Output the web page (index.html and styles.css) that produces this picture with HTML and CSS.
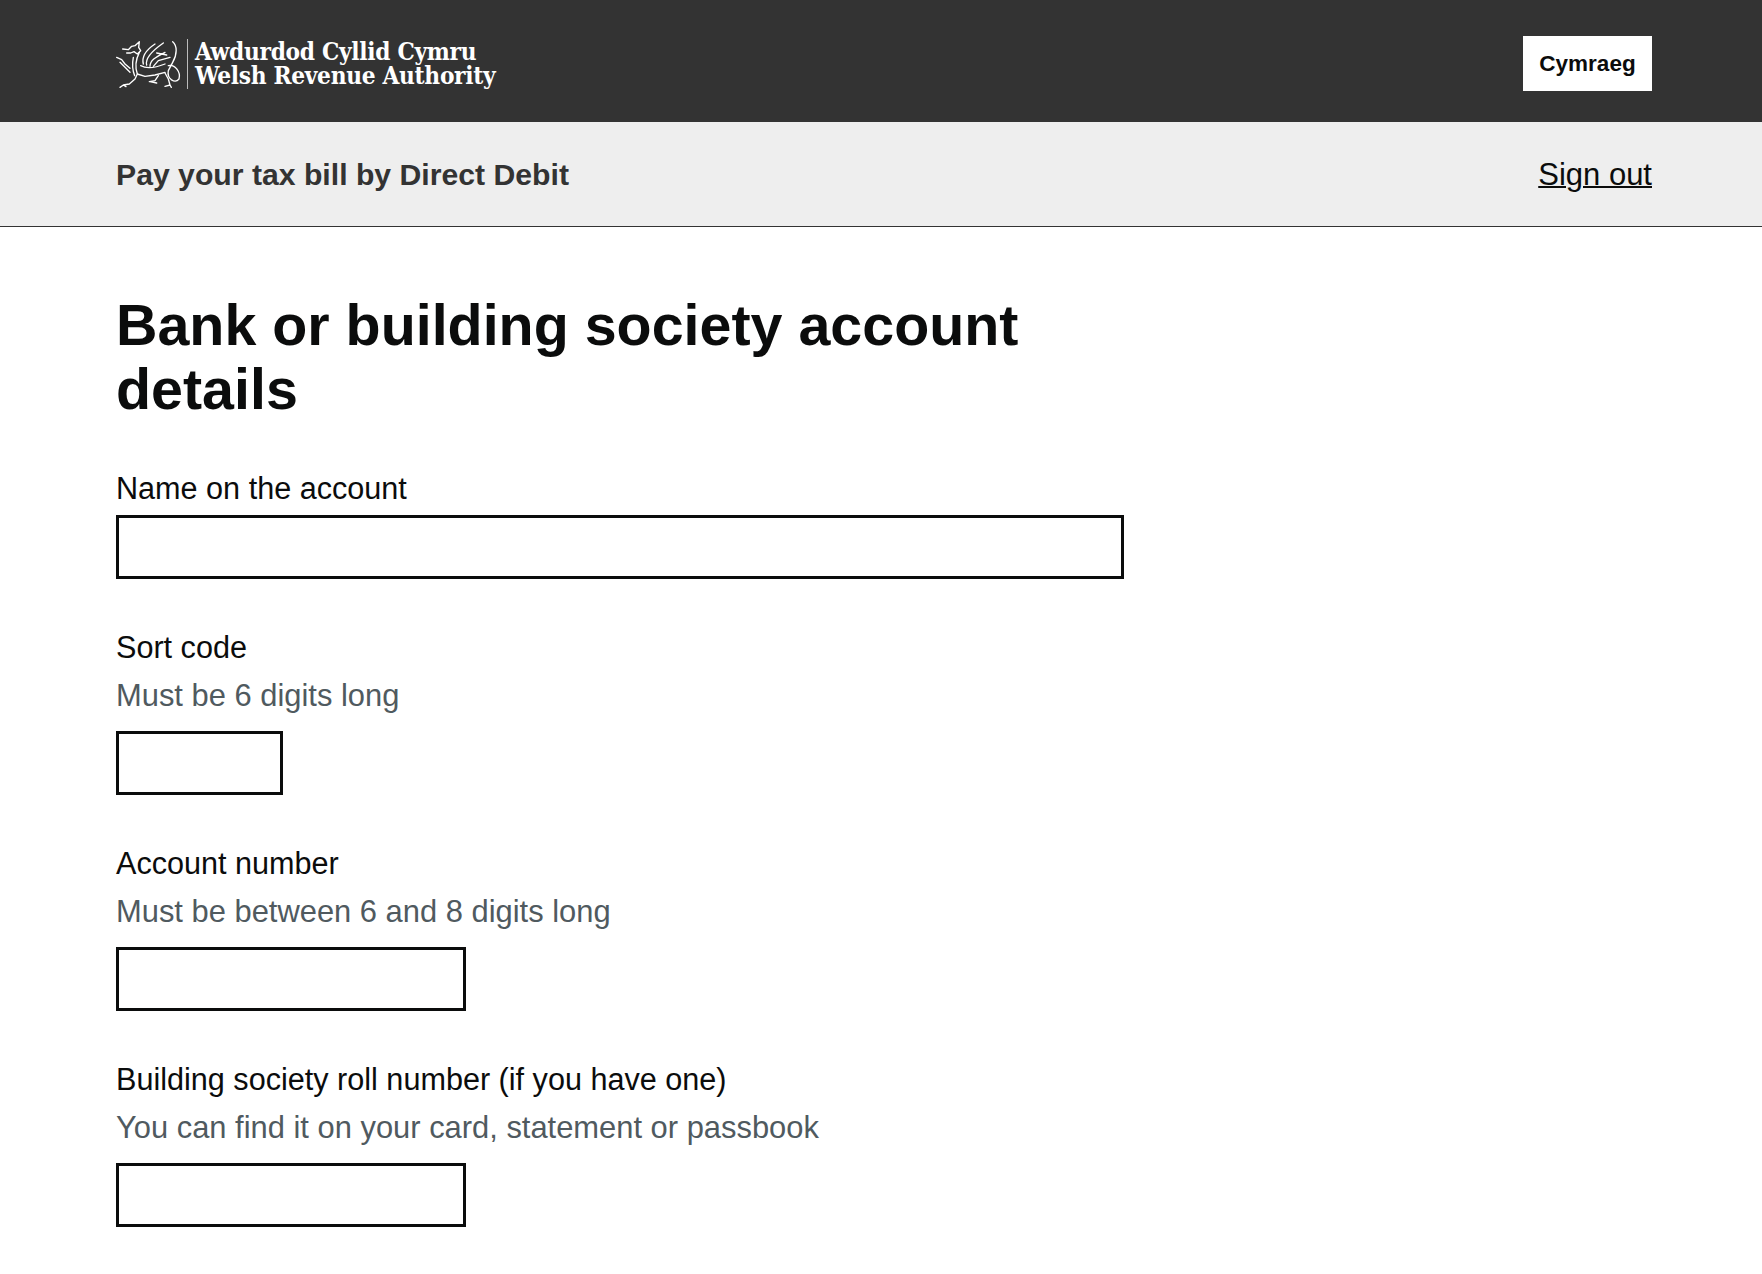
FILE: index.html
```html
<!DOCTYPE html>
<html lang="en">
<head>
<meta charset="utf-8">
<title>Bank or building society account details</title>
<link rel="stylesheet" href="styles.css">
</head>
<body>
<header class="top">
  <div class="logo">
    <svg class="dragon" viewBox="48 30 198 150" width="66" height="50" fill="none" stroke="#fff" stroke-width="4" stroke-linecap="round" stroke-linejoin="round">
      <path d="M68 60L85 62L95 52L105 50L118 38L116 55L122 65L112 75L102 68L92 72L80 72"/>
      <path d="M50 85L65 92L75 105L90 118M60 100L75 115L90 130"/>
      <path d="M118 70C108 90 105 115 112 135L105 150L88 165L70 168L60 175M70 168L78 173"/>
      <path d="M100 85C96 105 98 125 104 140"/>
      <path d="M112 135L135 142L165 138L195 130M122 110C140 120 170 115 195 105"/>
      <path d="M175 140L165 155L148 158M150 158L170 162M195 132L205 150L210 168L195 172M210 168L214 175"/>
      <path d="M130 105C125 85 135 65 165 45M140 108C135 90 150 70 190 42M150 112C150 95 165 85 195 70M160 112L175 95L210 85M170 72L200 78"/>
      <path d="M218 38C232 50 232 75 218 100L205 125C200 150 225 165 237 150C243 130 225 105 205 110"/>
    </svg>
    <span class="logo-rule"></span>
    <div class="logo-text">
      <span>Awdurdod Cyllid Cymru</span>
      <span>Welsh Revenue Authority</span>
    </div>
  </div>
  <a class="lang" href="#">Cymraeg</a>
</header>
<div class="sub">
  <span class="service">Pay your tax bill by Direct Debit</span>
  <a class="signout" href="#">Sign out</a>
</div>
<main class="main">
  <h1 class="title">Bank or building society account details</h1>
  <form class="form">
    <div class="field">
      <label class="label" for="name">Name on the account</label>
      <input class="input input-full" id="name" type="text">
    </div>
    <div class="field">
      <label class="label" for="sort">Sort code</label>
      <div class="hint">Must be 6 digits long</div>
      <input class="input input-s" id="sort" type="text">
    </div>
    <div class="field">
      <label class="label" for="acc">Account number</label>
      <div class="hint">Must be between 6 and 8 digits long</div>
      <input class="input input-m" id="acc" type="text">
    </div>
    <div class="field">
      <label class="label" for="roll">Building society roll number (if you have one)</label>
      <div class="hint">You can find it on your card, statement or passbook</div>
      <input class="input input-m" id="roll" type="text">
    </div>
  </form>
</main>
</body>
</html>
```
FILE: styles.css
```css
* { box-sizing: border-box; }
html, body { margin: 0; padding: 0; }
body { font-family: "Liberation Sans", Arial, sans-serif; color: #0b0c0c; background: #fff; }
.top { height: 122px; background: #333; display: flex; align-items: center; justify-content: space-between; padding: 5px 110px 0 116px; }
.logo { display: flex; align-items: center; }
.dragon { display: block; margin-right: 5px; }
.logo-rule { width: 1px; height: 50px; background: #bbb; margin-right: 7px; }
.logo-text { display: flex; flex-direction: column; font-family: "DejaVu Serif", serif; font-stretch: condensed; font-weight: 700; color: #fff; font-size: 24.2px; line-height: 24px; letter-spacing: -0.3px; }
.lang { display: flex; align-items: center; justify-content: center; width: 129px; height: 55px; background: #fff; color: #0b0c0c; font-weight: 700; font-size: 22.5px; text-decoration: none; }
.sub { height: 105px; background: #eee; border-bottom: 1px solid #333; display: flex; align-items: center; justify-content: space-between; padding: 2px 110px 0 116px; }
.service { font-size: 30.2px; font-weight: 700; color: #333; }
.signout { font-size: 31px; color: #0b0c0c; text-decoration: underline; text-decoration-thickness: 2px; }
.main { padding: 66px 116px 0; }
.title { margin: 0 0 47px; width: 1008px; font-size: 57.4px; line-height: 64px; font-weight: 700; }
.field { margin-bottom: 48px; display: flex; flex-direction: column; align-items: flex-start; }
.label { font-size: 30.6px; line-height: 40px; margin-bottom: 9px; }
.field:first-child .label { margin-bottom: 7px; }
.hint { font-size: 30.9px; line-height: 40px; color: #505a5f; margin-bottom: 15px; }
.input { height: 64px; border: 3px solid #0b0c0c; background: #fff; padding: 5px; border-radius: 0; display: block; }
.input-full { width: 1008px; }
.input-s { width: 167px; }
.input-m { width: 350px; }
```
